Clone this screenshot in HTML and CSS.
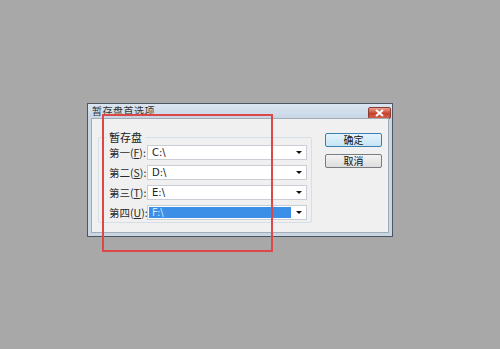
FILE: index.html
```html
<!DOCTYPE html>
<html lang="zh">
<head>
  <meta charset="UTF-8">
  <title>暂存盘首选项</title>
  <link rel="stylesheet" href="styles.css">
</head>
<body>
  <div class="dialog">
    <div class="titlebar">
      <span class="title">暂存盘首选项</span>
      <span class="close">
        <svg width="9" height="8" viewBox="0 0 9 8"><path d="M1 1 L8 7 M8 1 L1 7" stroke="#fff" stroke-width="2"/></svg>
      </span>
    </div>
    <div class="client">
      <fieldset class="group">
        <legend>暂存盘</legend>
        <div class="row">
          <label>第一(<u>F</u>):</label>
          <div class="select"><span class="value">C:\</span><span class="arrow"></span></div>
        </div>
        <div class="row">
          <label>第二(<u>S</u>):</label>
          <div class="select"><span class="value">D:\</span><span class="arrow"></span></div>
        </div>
        <div class="row">
          <label>第三(<u>T</u>):</label>
          <div class="select"><span class="value">E:\</span><span class="arrow"></span></div>
        </div>
        <div class="row">
          <label>第四(<u>U</u>):</label>
          <div class="select"><span class="value selected">F:\</span><span class="arrow"></span></div>
        </div>
      </fieldset>
      <div class="buttons">
        <button class="btn default">确定</button>
        <button class="btn">取消</button>
      </div>
    </div>
  </div>
  <div class="mark"></div>
</body>
</html>
```

FILE: styles.css
```css
body {
  margin: 0;
  padding: 103px 0 0 87px;
  height: 349px;
  box-sizing: border-box;
  background: #a8a8a8;
  font-family: "Noto Sans CJK SC", "DejaVu Sans", sans-serif;
  font-size: 11px;
  color: #1a1a1a;
  position: relative;
}

.dialog {
  width: 306px;
  height: 134px;
  box-sizing: border-box;
  border: 1px solid #4c5560;
  background: #c9d6e3;
  display: flex;
  flex-direction: column;
}

.titlebar {
  height: 14px;
  display: flex;
  align-items: center;
  justify-content: space-between;
  padding: 0 1px 0 4px;
  background: linear-gradient(#dbe6f1, #c8d6e4);
}

.title {
  font-size: 10px;
  line-height: 12px;
  color: #333;
  letter-spacing: 0.5px;
}

.close {
  width: 23px;
  height: 12px;
  margin-top: 3px;
  border: 1px solid #8a3a30;
  border-radius: 2px;
  box-sizing: border-box;
  background: linear-gradient(#e9a08f, #c8432c 55%, #d0604a);
  display: flex;
  align-items: center;
  justify-content: center;
}

.client {
  flex: 1;
  margin: 0 3px 3px 3px;
  border: 1px solid #a3acb6;
  background: #f0f0f0;
  display: flex;
  padding: 12px 6px 0 6px;
}

.group {
  margin: 0;
  padding: 2px 4px 1px 10px;
  width: 216px;
  height: 92px;
  box-sizing: border-box;
  border: 1px solid #d5dfe5;
  border-radius: 2px;
  min-width: 0;
}

.group legend {
  padding: 0 3px;
  margin-left: -3px;
  line-height: 12px;
  font-size: 11px;
}

.row {
  display: flex;
  align-items: center;
  height: 15px;
  margin-bottom: 5px;
}

.row label {
  width: 38px;
  font-size: 10.5px;
  color: #2a2a2a;
  white-space: nowrap;
}

.select {
  flex: 1;
  height: 15px;
  box-sizing: border-box;
  border: 1px solid #c9ced4;
  background: #fff;
  display: flex;
  align-items: center;
  padding: 1px;
}

.value {
  flex: 1;
  height: 11px;
  line-height: 11px;
  padding-left: 3px;
  font-family: "DejaVu Sans", sans-serif;
  font-size: 10px;
  color: #222;
}

.value.selected {
  background: #3b8fe6;
  color: #cfe6ff;
  margin-right: 1px;
}

.arrow {
  width: 13px;
  display: flex;
  justify-content: center;
}

.arrow::before {
  content: "";
  border-left: 3px solid transparent;
  border-right: 3px solid transparent;
  border-top: 3px solid #111;
}

.buttons {
  margin-left: 13px;
  margin-top: 2px;
  display: flex;
  flex-direction: column;
  gap: 7px;
}

.btn {
  width: 57px;
  height: 14px;
  padding: 0;
  font-family: "Noto Sans CJK SC", sans-serif;
  font-size: 10px;
  line-height: 12px;
  color: #111;
  border: 1px solid #777c82;
  border-radius: 2px;
  background: linear-gradient(#f4f4f4, #dcdcdc);
}

.btn.default {
  border-color: #3c7fb1;
  background: linear-gradient(#e5f4fc, #c4e5f6);
}

.mark {
  position: absolute;
  left: 102px;
  top: 114px;
  width: 171px;
  height: 138px;
  box-sizing: border-box;
  border: 2px solid #dc4848;
}
```
